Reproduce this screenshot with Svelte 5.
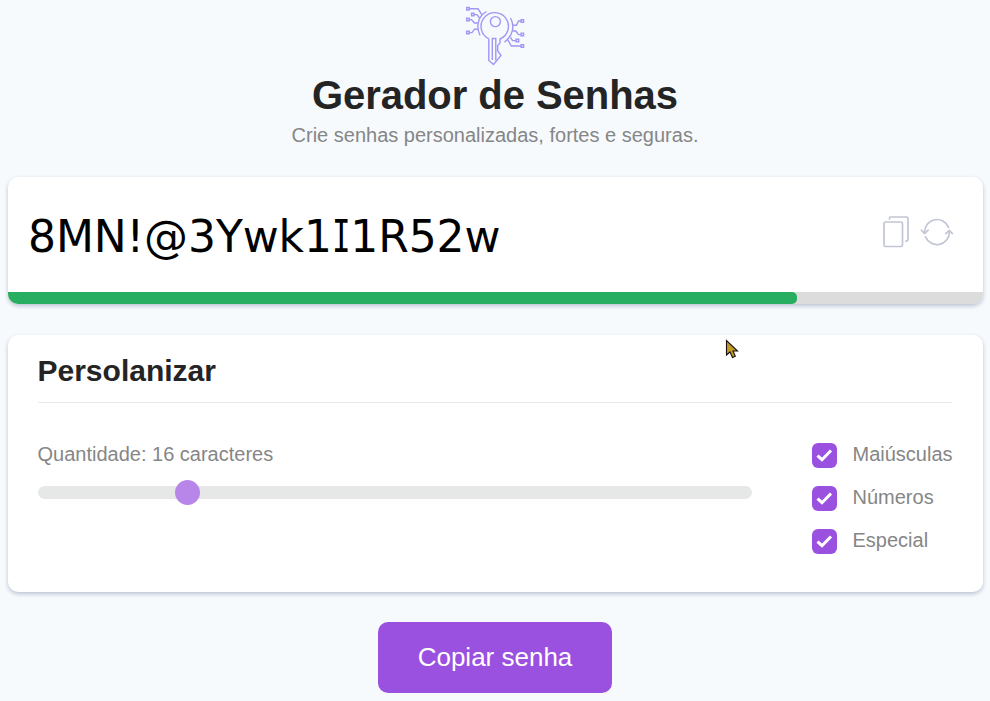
<script>
  let length = $state(16);
  let options = $state([
    { label: 'Maiúsculas', on: true },
    { label: 'Números', on: true },
    { label: 'Especial', on: true }
  ]);
  const strength = 80.9;
  const min = 6;
  const max = 56;
  const position = $derived(((length - min) / (max - min)) * 100);
</script>

<main>
  <header>
    <svg class="logo" viewBox="0 0 60 60" fill="none" stroke="#a396f4" stroke-width="1.4">
      <path d="M23.8 32.7A13.7 13.7 0 1 1 35 33V37L32.7 39.5V45L36 49.5L28.5 58.5L23.8 54.5V32.7" />
      <path d="M27.3 54V32.5H30.8V54.5" />
      <circle cx="30.4" cy="15.6" r="5" />
      <path d="M21.5 5.5C12.5 10.5 11 21 15 29.5M45.5 12C50 20 48 29.5 39.5 36.3" />
      <path d="M4.2 2.8H13L17 8.8M9 8.6H12L14.5 12M4.2 13.6H6.5L9.4 17H12.7M4.2 26.6H7L9.4 23.2H12.7" />
      <path d="M56 15H53.5L51.5 19.3H48M56 28.6H53.5L50.8 25H48M51 34.6H47.6L45.5 31.5M56 40H46.3L42.8 33.8" />
      <path d="M1.7 1.5h2.5V4H1.7zM6.5 7.3h2.5v2.5H6.5zM1.7 12.3h2.5v2.5H1.7zM1.7 25.3h2.5v2.5H1.7zM56.1 13.7h2.5v2.5h-2.5zM56.1 27.3h2.5v2.5h-2.5zM51.2 33.3h2.5v2.5h-2.5zM56.1 38.7h2.5v2.5h-2.5z" />
    </svg>
    <h1>Gerador de Senhas</h1>
    <p>Crie senhas personalizadas, fortes e seguras.</p>
  </header>

  <section class="card password">
    <div class="value">
      <div class="text">8MN!@3Ywk1<span class="serif-i">I</span>1R52w</div>
      <div class="actions">
        <svg width="27" height="32" viewBox="0 0 27 32" fill="none" stroke="#c2c5d3" stroke-width="1.7" stroke-linecap="round">
          <rect x="1" y="6" width="18.5" height="24.5" rx="1.5" />
          <path d="M6.5 3V2.5Q6.5 1 8 1H23.5Q25 1 25 2.5V23Q25 25.2 23 25.2" />
        </svg>
        <svg width="34" height="32" viewBox="0 0 34 32" fill="none" stroke="#c2c5d3" stroke-width="1.7" stroke-linecap="round" stroke-linejoin="round">
          <path d="M4.5 16A12.5 12.8 0 0 1 28.5 11.3M29.5 16A12.5 12.8 0 0 1 5.5 20.8" />
          <path d="M1.5 14.2L4.5 17.5L8.2 14.2M25.8 17.6L29.5 14.5L32.4 17.6" />
        </svg>
      </div>
    </div>
    <div class="bar"><div class="fill" style="width: {strength}%"></div></div>
  </section>

  <section class="card custom">
    <h2>Persolanizar</h2>
    <div class="settings">
      <div class="amount">
        <div class="label">Quantidade: {length} caracteres</div>
        <div class="slider">
          <div class="knob" style="left: calc((100% - 27px) * {position / 100})"></div>
          <input type="range" {min} {max} bind:value={length} aria-label="Quantidade" />
        </div>
      </div>
      <div class="checks">
        {#each options as option}
          <label>
            <input type="checkbox" bind:checked={option.on} />
            <span class="box" class:on={option.on}>
              <svg width="17" height="15" viewBox="0 0 17 15" fill="none" stroke="#fff" stroke-width="3">
                <path d="M1.5 7.6L6 11.7L15 2.5" />
              </svg>
            </span>
            <span>{option.label}</span>
          </label>
        {/each}
      </div>
    </div>
  </section>

  <button>Copiar senha</button>

  <svg class="pointer" width="15" height="21" viewBox="0 0 15 21">
    <path d="M1.5 1.5V16L5 13L7.5 18.5L10.3 17.3L8 12H12.5Z" fill="#c39b22" stroke="#171111" stroke-width="1.1" />
  </svg>
</main>

<style>
  :global(body) {
    margin: 0;
    background: #f6fafd;
    overflow: hidden;
  }
  main {
    position: relative;
    box-sizing: border-box;
    width: 990px;
    height: 701px;
    padding: 6px 7px 0 8px;
    background: #f6fafd;
    color: #868686;
    font: 20px/24px "Liberation Sans", Arial, sans-serif;
  }
  header {
    display: flex;
    flex-direction: column;
    align-items: center;
    height: 171px;
    padding-right: 1px;
  }
  .logo {
    width: 60px;
    height: 60px;
  }
  h1 {
    margin: 6px 0 0;
    color: #242424;
    font-size: 40px;
    line-height: 46px;
    letter-spacing: -0.05px;
  }
  p {
    margin: 5px 0 0;
    line-height: 24px;
  }
  .card {
    box-sizing: border-box;
    background: #fff;
    border-radius: 10px;
    box-shadow: 0 2px 4px #b9c3d2;
  }
  .password {
    height: 127px;
    overflow: hidden;
  }
  .value {
    display: flex;
    justify-content: space-between;
    height: 115px;
    padding: 0 29px 0 20px;
  }
  .text {
    color: #000;
    font-family: "DejaVu Sans", Verdana, sans-serif;
    font-size: 44px;
    line-height: 119px;
    letter-spacing: -0.1px;
    white-space: nowrap;
  }
  .serif-i {
    display: inline-block;
    width: 18.5px;
    font-family: "DejaVu Sans Mono", monospace;
    line-height: 1;
    transform: scaleX(0.7);
    transform-origin: 0 50%;
  }
  .actions {
    display: flex;
    gap: 10px;
    padding-top: 39px;
  }
  .bar {
    height: 12px;
    background: #dcdcdc;
  }
  .fill {
    height: 12px;
    background: #27ae60;
    border-radius: 0 5px 5px 0;
  }
  .custom {
    height: 257px;
    margin-top: 31px;
    padding: 15px 31px 0 30px;
  }
  h2 {
    height: 52px;
    margin: 0;
    border-bottom: 1px solid #ebebeb;
    color: #242424;
    font-size: 30px;
    line-height: 41px;
    text-indent: -0.5px;
  }
  .settings {
    display: flex;
    justify-content: space-between;
    padding-top: 39px;
  }
  .label {
    text-indent: -0.5px;
  }
  .amount {
    width: 714px;
  }
  .slider {
    position: relative;
    height: 13px;
    margin-top: 20px;
    background: #e5e8e7;
    border-radius: 7px;
  }
  .knob {
    position: absolute;
    top: -6px;
    width: 25px;
    height: 25px;
    border-radius: 50%;
    background: #b886e9;
  }
  .slider input {
    position: absolute;
    inset: 0;
    width: 100%;
    margin: 0;
    opacity: 0;
  }
  .checks {
    display: flex;
    flex-direction: column;
    gap: 18px;
    width: 140px;
  }
  .checks label {
    display: flex;
    gap: 15.5px;
    height: 25px;
    white-space: nowrap;
  }
  .checks input {
    position: absolute;
    opacity: 0;
  }
  .box {
    display: flex;
    flex: none;
    align-items: center;
    justify-content: center;
    width: 25px;
    height: 25px;
    margin-top: 1px;
    border-radius: 6px;
    background: #dcdcdc;
  }
  .box.on {
    background: #9b51e0;
  }
  button {
    display: block;
    width: 234px;
    height: 71px;
    margin: 30px 0 0 370px;
    padding: 0;
    border: 0;
    border-radius: 10px;
    background: #9b51e0;
    color: #fff;
    font: 26px/71px "Liberation Sans", Arial, sans-serif;
  }
  .pointer {
    position: absolute;
    top: 339px;
    left: 725px;
  }
</style>
